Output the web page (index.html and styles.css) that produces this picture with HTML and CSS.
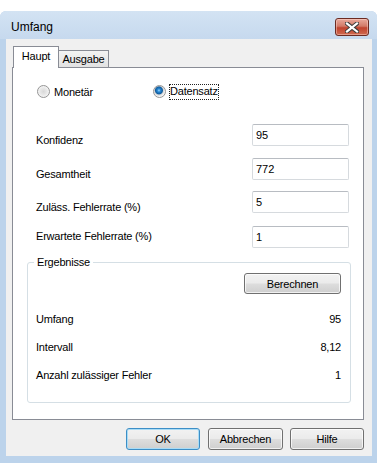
FILE: index.html
```html
<!DOCTYPE html>
<html lang="de">
<head>
    <meta charset="UTF-8">
    <title>Umfang</title>
    <link rel="stylesheet" href="styles.css">
</head>
<body>
    <div class="window">
        <div class="titlebar">
            <span class="title">Umfang</span>
            <span class="close">
                <svg width="14" height="11" viewBox="0 0 14 11">
                    <path d="M2 1.5 L12 9.5 M12 1.5 L2 9.5" stroke="#3d3d3d" stroke-width="4.2" stroke-linecap="square"/>
                    <path d="M2 1.5 L12 9.5 M12 1.5 L2 9.5" stroke="#fff" stroke-width="2.2" stroke-linecap="square"/>
                </svg>
            </span>
        </div>
        <div class="client">
            <div class="tabs">
                <div class="tab tab-active">Haupt</div>
                <div class="tab">Ausgabe</div>
            </div>
            <div class="panel">
                <div class="radios">
                    <label class="radio"><span class="radio-dot"></span>Monetär</label>
                    <label class="radio radio-on"><span class="radio-dot"></span><span class="focus">Datensatz</span></label>
                </div>
                <div class="field">
                    <span class="field-label">Konfidenz</span>
                    <input class="input" type="text" value="95">
                </div>
                <div class="field field-2">
                    <span class="field-label">Gesamtheit</span>
                    <input class="input" type="text" value="772">
                </div>
                <div class="field field-3">
                    <span class="field-label">Zuläss. Fehlerrate (%)</span>
                    <input class="input" type="text" value="5">
                </div>
                <div class="field field-4">
                    <span class="field-label">Erwartete Fehlerrate (%)</span>
                    <input class="input" type="text" value="1">
                </div>
                <div class="group">
                    <span class="group-title">Ergebnisse</span>
                    <div class="calc-row">
                        <button class="btn btn-calc">Berechnen</button>
                    </div>
                    <div class="result"><span>Umfang</span><span>95</span></div>
                    <div class="result"><span>Intervall</span><span>8,12</span></div>
                    <div class="result"><span>Anzahl zulässiger Fehler</span><span>1</span></div>
                </div>
            </div>
            <div class="actions">
                <button class="btn btn-default">OK</button>
                <button class="btn btn-wide">Abbrechen</button>
                <button class="btn">Hilfe</button>
            </div>
        </div>
    </div>
</body>
</html>
```

FILE: styles.css
```css
* {
    margin: 0;
    padding: 0;
    box-sizing: border-box;
}
body {
    background: #fff;
    font-family: "Liberation Sans", Arial, sans-serif;
    font-size: 11px;
    letter-spacing: -0.2px;
    color: #000;
}
.window {
    margin-top: 11px;
    height: 452px;
    background: #bcd3eb;
    border-radius: 6px 6px 0 0;
    overflow: hidden;
}
.titlebar {
    display: flex;
    justify-content: space-between;
    align-items: flex-start;
    height: 28px;
    padding: 0 8px 0 11px;
    background: linear-gradient(#d3e3f3, #c6d9ee);
}
.title {
    margin-top: 9px;
    font-size: 12px;
    line-height: 15px;
    letter-spacing: 0;
    color: #000;
}
.close {
    display: flex;
    align-items: center;
    justify-content: center;
    margin-top: 7px;
    width: 34px;
    height: 18px;
    border: 1px solid #6b2b22;
    border-radius: 3px;
    background: linear-gradient(#e9a99c 0%, #d27a68 45%, #c0432e 55%, #cf6a50 100%);
    box-shadow: inset 0 0 0 1px rgba(255, 220, 210, 0.45);
}
.client {
    margin: 0 5px 0 6px;
    height: 417px;
    padding: 7px 8px 0 6px;
    background: #f0f0f0;
}
.tabs {
    display: flex;
    align-items: flex-end;
    height: 21px;
}
.tab {
    width: 50px;
    height: 17px;
    padding-top: 2px;
    line-height: 13px;
    text-align: center;
    border: 1px solid #898c95;
    border-left: none;
    border-bottom: none;
    background: linear-gradient(#f3f3f3, #e2e2e2);
}
.tab-active {
    position: relative;
    z-index: 1;
    width: 46px;
    height: 22px;
    margin-left: 1px;
    margin-bottom: -1px;
    padding-top: 3px;
    border-left: 1px solid #898c95;
    background: #fff;
}
.panel {
    height: 353px;
    padding: 15px 14px 0 23px;
    background: #fff;
    border: 1px solid #898c95;
}
.radios {
    display: flex;
    height: 17px;
    align-items: center;
}
.radio {
    display: flex;
    align-items: center;
    width: 115px;
    margin-left: 1px;
}
.radio-dot {
    width: 13px;
    height: 13px;
    margin-right: 4px;
    border: 1px solid #959595;
    border-radius: 50%;
    background: radial-gradient(circle at 50% 50%, #d8d8d8 0, #e6e6e6 3px, #f6f6f6 6px);
}
.radio-on .radio-dot {
    margin-right: 3px;
    background: radial-gradient(circle at 45% 40%, #9fdcff 0, #2a8ad6 1.5px, #0f5c9e 3.5px, #d7d7d7 4.5px, #f6f6f6 6px);
}
.focus {
    padding: 1px 1px 2px 1px;
    line-height: 13px;
    outline: 1px dotted #222;
    outline-offset: -1px;
}
.field {
    display: flex;
    justify-content: space-between;
    align-items: flex-end;
    height: 22px;
    margin-top: 24px;
}
.field-2 {
    margin-top: 12px;
}
.field-3 {
    margin-top: 11px;
}
.field-4 {
    margin-top: 13px;
}
.field-label {
    line-height: 13px;
    margin-bottom: -1px;
}
.field-4 .field-label {
    margin-bottom: 5px;
}
.input {
    width: 97px;
    height: 22px;
    padding: 2px 3px;
    font-family: "Liberation Sans", Arial, sans-serif;
    font-size: 11px;
    line-height: 13px;
    color: #000;
    border: 1px solid #d6dade;
    border-top-color: #b8bcc2;
    border-radius: 2px;
    background: #fff;
    outline: none;
}
.group {
    position: relative;
    height: 141px;
    margin: 14px -2px 0 -9px;
    padding: 10px 9px 0 8px;
    border: 1px solid #d5dfe5;
    border-radius: 3px;
}
.group-title {
    position: absolute;
    top: -7px;
    left: 6px;
    padding: 0 3px;
    line-height: 13px;
    background: #fff;
}
.calc-row {
    display: flex;
    justify-content: flex-end;
    margin-bottom: 11px;
}
.btn {
    width: 74px;
    height: 22px;
    font-family: "Liberation Sans", Arial, sans-serif;
    font-size: 11px;
    letter-spacing: -0.2px;
    color: #000;
    border: 1px solid #707070;
    border-radius: 3px;
    background: linear-gradient(#f2f2f2 0%, #ebebeb 48%, #dddddd 52%, #cfcfcf 100%);
    box-shadow: inset 0 0 0 1px rgba(255, 255, 255, 0.7);
}
.btn-calc {
    width: 97px;
    height: 21px;
}
.btn-wide {
    width: 75px;
}
.btn-default {
    border-color: #3c8ec6;
    box-shadow: inset 0 0 0 1px #a9dcf6;
}
.result {
    display: flex;
    justify-content: space-between;
    align-items: center;
    height: 28px;
}
.actions {
    display: flex;
    justify-content: flex-end;
    gap: 8px;
    margin-top: 8px;
}
.actions .btn:last-child {
    margin-left: -1px;
}
```
